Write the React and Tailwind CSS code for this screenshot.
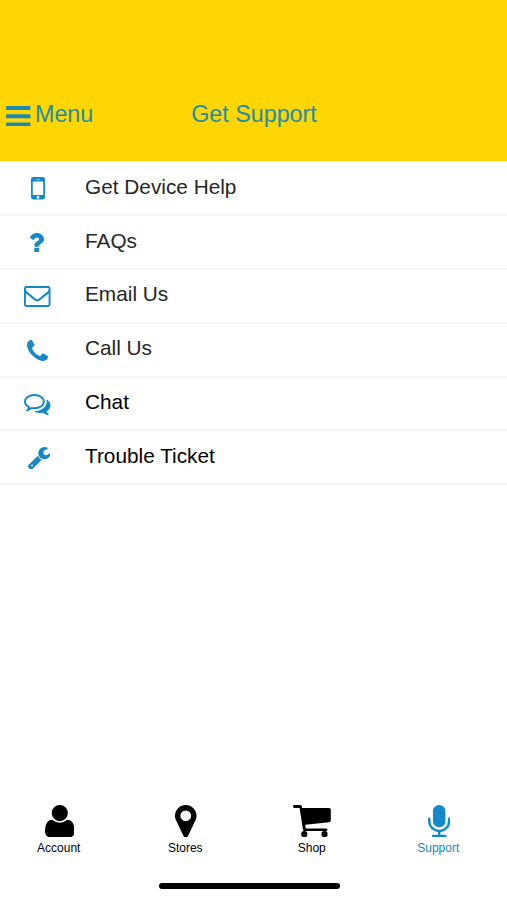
const ICONS = {
  bars: {
    box: "128 256 1536 1280",
    d: "M1664 1344v128q0 26-19 45t-45 19h-1408q-26 0-45-19t-19-45v-128q0-26 19-45t45-19h1408q26 0 45 19t19 45zm0-512v128q0 26-19 45t-45 19h-1408q-26 0-45-19t-19-45v-128q0-26 19-45t45-19h1408q26 0 45 19t19 45zm0-512v128q0 26-19 45t-45 19h-1408q-26 0-45-19t-19-45v-128q0-26 19-45t45-19h1408q26 0 45 19t19 45z",
  },
  mobile: {
    box: "512 256 768 1280",
    d: "M976 1408q0-33-23.5-56.5t-56.5-23.5-56.5 23.5-23.5 56.5 23.5 56.5 56.5 23.5 56.5-23.5 23.5-56.5zm208-160v-704q0-13-9.5-22.5t-22.5-9.5h-512q-13 0-22.5 9.5t-9.5 22.5v704q0 13 9.5 22.5t22.5 9.5h512q13 0 22.5-9.5t9.5-22.5zm-192-848q0-16-16-16h-160q-16 0-16 16t16 16h160q16 0 16-16zm288-16v1024q0 52-38 90t-90 38h-512q-52 0-90-38t-38-90v-1024q0-52 38-90t90-38h512q52 0 90 38t38 90z",
  },
  question: {
    box: "484 256 920 1280",
    d: "M1088 1256v240q0 16-12 28t-28 12h-240q-16 0-28-12t-12-28v-240q0-16 12-28t28-12h240q16 0 28 12t12 28zm316-600q0 54-15.5 101t-35 76.5-55 59.5-57.5 43.5-61 35.5q-41 23-68.5 65t-27.5 67q0 17-12 32.5t-28 15.5h-240q-15 0-25.5-18.5t-10.5-37.5v-45q0-83 65-156.5t143-108.5q59-27 84-56t25-76q0-42-46.5-74t-107.5-32q-65 0-108 29-35 25-107 115-13 16-31 16-12 0-25-8l-164-125q-13-10-15.5-25t5.5-28q160-266 464-266 80 0 161 31t146 83 106 127.5 41 158.5z",
  },
  envelope: {
    box: "0 256 1792 1408",
    d: "M1664 1504v-768q-32 36-69 66-268 206-426 338-51 43-83 67t-86.5 48.5-102.5 24.5h-2q-48 0-102.5-24.5t-86.5-48.5-83-67q-158-132-426-338-37-30-69-66v768q0 13 9.5 22.5t22.5 9.5h1472q13 0 22.5-9.5t9.5-22.5zm0-1051v-24.5l-.5-13-3-12.5-5.5-9-9-7.5-14-2.5h-1472q-13 0-22.5 9.5t-9.5 22.5q0 168 147 284 193 152 401 317 6 5 35 29.5t46 37.5 44.5 31.5 50.5 27.5 43 9h2q20 0 43-9t50.5-27.5 44.5-31.5 46-37.5 35-29.5q208-165 401-317 54-43 100.5-115.5t46.5-131.5zm128-37v1088q0 66-47 113t-113 47h-1472q-66 0-113-47t-47-113v-1088q0-66 47-113t113-47h1472q66 0 113 47t47 113z",
  },
  phone: {
    box: "192 128 1408 1408",
    d: "M1600 1240q0 27-10 70.5t-21 68.5q-21 50-122 106-94 51-186 51-27 0-53-3.5t-57.5-12.5-47-14.5-55.5-20.5-49-18q-98-35-175-83-127-79-264-216t-216-264q-48-77-83-175-3-9-18-49t-20.5-55.5-14.5-47-12.5-57.5-3.5-53q0-92 51-186 56-101 106-122 25-11 68.5-21t70.5-10q14 0 21 3 18 6 53 76 11 19 30 54t35 63.5 31 53.5q3 4 17.5 25t21.5 35.5 7 28.5q0 20-28.5 50t-62 55-62 53-28.5 46q0 9 5 22.5t8.5 20.5 14 24 11.5 19q76 137 174 235t235 174q2 1 19 11.5t24 14 20.5 8.5 22.5 5q18 0 46-28.5t53-62 55-62 50-28.5q14 0 28.5 7t35.5 21.5 25 17.5q25 15 53.5 31t63.5 35 54 30q70 35 76 53 3 7 3 21z",
  },
  comments: {
    box: "0 256 1792 1408",
    d: "M704 384q-153 0-286 52t-211.5 141-78.5 191q0 82 53 158t149 132l97 56-35 84q34-20 62-39l44-31 53 10q78 14 153 14 153 0 286-52t211.5-141 78.5-191-78.5-191-211.5-141-286-52zm0-128q191 0 353.5 68.5t256.5 186.5 94 257-94 257-256.5 186.5-353.5 68.5q-86 0-176-16-124 88-278 128-36 9-86 16h-3q-11 0-20.5-8t-11.5-21q-1-3-1-6.5t.5-6.5 2-6l2.5-5 3.5-5.5 4-5 4.5-5 4-4.5q5-6 23-25t26-29.5 22.5-29 25-38.5 20.5-44q-124-72-195-177t-71-224q0-139 94-257t256.5-186.5 353.5-68.5zm822 1169q10 24 20.5 44t25 38.5 22.5 29 26 29.5 23 25q1 1 4 4.5t4.5 5 4 5 3.5 5.5l2.5 5 2 6 .5 6.5-1 6.5q-3 14-13 22t-22 7q-50-7-86-16-154-40-278-128-90 16-176 16-271 0-472-132 58 4 88 4 161 0 309-45t264-129q125-92 192-212t67-254q0-77-23-152 129 71 204 178t75 230q0 120-71 224.5t-195 176.5z",
  },
  wrench: {
    box: "85 128 1641 1643",
    d: "M448 1472q0-26-19-45t-45-19-45 19-19 45 19 45 45 19 45-19 19-45zm644-420l-682 682q-37 37-90 37-52 0-91-37l-106-108q-38-36-38-90 0-53 38-91l681-681q39 98 114.5 173.5t173.5 114.5zm634-435q0 39-23 106-47 134-164.5 217.5t-258.5 83.5q-185 0-316.5-131.5t-131.5-316.5 131.5-316.5 316.5-131.5q58 0 121.5 16.5t107.5 46.5q16 11 16 28t-16 28l-293 169v224l193 107q5-3 79-48.5t135.5-81 70.5-35.5q15 0 23.5 10t8.5 25z",
  },
  user: {
    box: "192 128 1408 1536",
    d: "M1600 1405q0 120-73 189.5t-194 69.5h-874q-121 0-194-69.5t-73-189.5q0-53 3.5-103.5t14-109 26.5-108.5 43-97.5 62-81 85.5-53.5 111.5-20q9 0 42 21.5t74.5 48 108 48 133.5 21.5 133.5-21.5 108-48 74.5-48 42-21.5q61 0 111.5 20t85.5 53.5 62 81 43 97.5 26.5 108.5 14 109 3.5 103.5zm-320-893q0 159-112.5 271.5t-271.5 112.5-271.5-112.5-112.5-271.5 112.5-271.5 271.5-112.5 271.5 112.5 112.5 271.5z",
  },
  marker: {
    box: "384 128 1024 1536",
    d: "M1152 640q0-106-75-181t-181-75-181 75-75 181 75 181 181 75 181-75 75-181zm256 0q0 109-33 179l-364 774q-16 33-47.5 52t-67.5 19-67.5-19-46.5-52l-365-774q-33-70-33-179 0-212 150-362t362-150 362 150 150 362z",
  },
  cart: {
    box: "0 0 114 98",
    d: "M4 0H22Q27 0 27 5V9H109Q114 9 114 14V46Q114 51 109 52L37 60L38 71H100Q104 71 104 75T100 79H34Q31 79 30 75L20 9H4Q0 9 0 4.5T4 0ZM34 79A9.5 9.5 0 1 1 34 98A9.5 9.5 0 1 1 34 79ZM95 79A9.5 9.5 0 1 1 95 98A9.5 9.5 0 1 1 95 79Z",
  },
  microphone: {
    box: "320 0 1152 1664",
    d: "M1472 704v128q0 221-147.5 384.5t-364.5 187.5v132h256q26 0 45 19t19 45-19 45-45 19h-640q-26 0-45-19t-19-45 19-45 45-19h256v-132q-217-24-364.5-187.5t-147.5-384.5v-128q0-26 19-45t45-19 45 19 19 45v128q0 185 131.5 316.5t316.5 131.5 316.5-131.5 131.5-316.5v-128q0-26 19-45t45-19 45 19 19 45zm-256-384v512q0 132-94 226t-226 94-226-94-94-226v-512q0-132 94-226t226-94 226 94 94 226z",
  },
};

function Icon({ name, className }) {
  const { box, d } = ICONS[name];
  return (
    <svg viewBox={box} preserveAspectRatio="none" fill="currentColor" className={`block shrink-0 ${className}`} aria-hidden="true">
      <path d={d} />
    </svg>
  );
}

const ROWS = [
  { icon: "mobile", label: "Get Device Help", size: "w-[14px] h-[22.5px]", text: "text-[#262626]" },
  { icon: "question", label: "FAQs", size: "w-[14px] h-[19.5px] mr-[2px]", text: "text-[#262626]" },
  { icon: "envelope", label: "Email Us", size: "w-[26.5px] h-[21px]", text: "text-[#262626]" },
  { icon: "phone", label: "Call Us", size: "w-[21px] h-[21px]", text: "text-[#262626]" },
  { icon: "comments", label: "Chat", size: "w-[26.5px] h-[21px]", text: "text-black" },
  { icon: "wrench", label: "Trouble Ticket", size: "w-[22.5px] h-[22.5px] ml-[3px]", text: "text-black" },
];

const TABS = [
  { icon: "user", label: "Account", size: "w-[29.6px] h-[32.3px] ml-[1.5px]", color: "text-black" },
  { icon: "marker", label: "Stores", size: "w-[21.5px] h-[32.3px] ml-[1px]", color: "text-black" },
  { icon: "cart", label: "Shop", size: "w-[37.8px] h-[32.3px] ml-[1px]", color: "text-black" },
  { icon: "microphone", label: "Support", size: "w-[22.4px] h-[32.3px] ml-[1px]", color: "text-[#1589c7]" },
];

export default function App() {
  return (
    <div className="flex h-[900px] w-[507px] flex-col overflow-hidden bg-white font-['Liberation_Sans',Arial,sans-serif]">
      <header className="grid h-[161px] shrink-0 grid-cols-[1fr_auto_1fr] items-start bg-[#ffd503] pt-[100px] text-[23.3px] leading-7 text-[#218ea5]">
        <button className="flex items-start pl-[6px]">
          <Icon name="bars" className="mt-[5.5px] h-[20.5px] w-[24.5px] text-[#1b89b5]" />
          <span className="ml-[4.5px]">Menu</span>
        </button>
        <h1 className="pl-[1px]">Get Support</h1>
      </header>

      <ul className="shrink-0 pt-[1px]">
        {ROWS.map((row) => (
          <li key={row.label} className="flex h-[53.9px] items-center border-b-2 border-[#f5f5f5] pb-[2.5px]">
            <span className="flex w-[75px] justify-center pt-[4px] text-[#1589c7]">
              <Icon name={row.icon} className={row.size} />
            </span>
            <span className={`ml-[10px] text-[20.8px] leading-6 ${row.text}`}>{row.label}</span>
          </li>
        ))}
      </ul>

      <footer className="mt-auto flex h-[95px] shrink-0 flex-col items-center">
        <nav className="grid w-full grid-cols-4 pr-[1px]">
          {TABS.map((tab) => (
            <button key={tab.label} className={`flex flex-col items-center pr-[9px] ${tab.color}`}>
              <Icon name={tab.icon} className={tab.size} />
              <span className="mt-[4px] text-[12px] leading-[15px]">{tab.label}</span>
            </button>
          ))}
        </nav>
        <div className="mt-[27px] ml-[-9px] h-[6px] w-[181px] rounded-full bg-black" />
      </footer>
    </div>
  );
}
